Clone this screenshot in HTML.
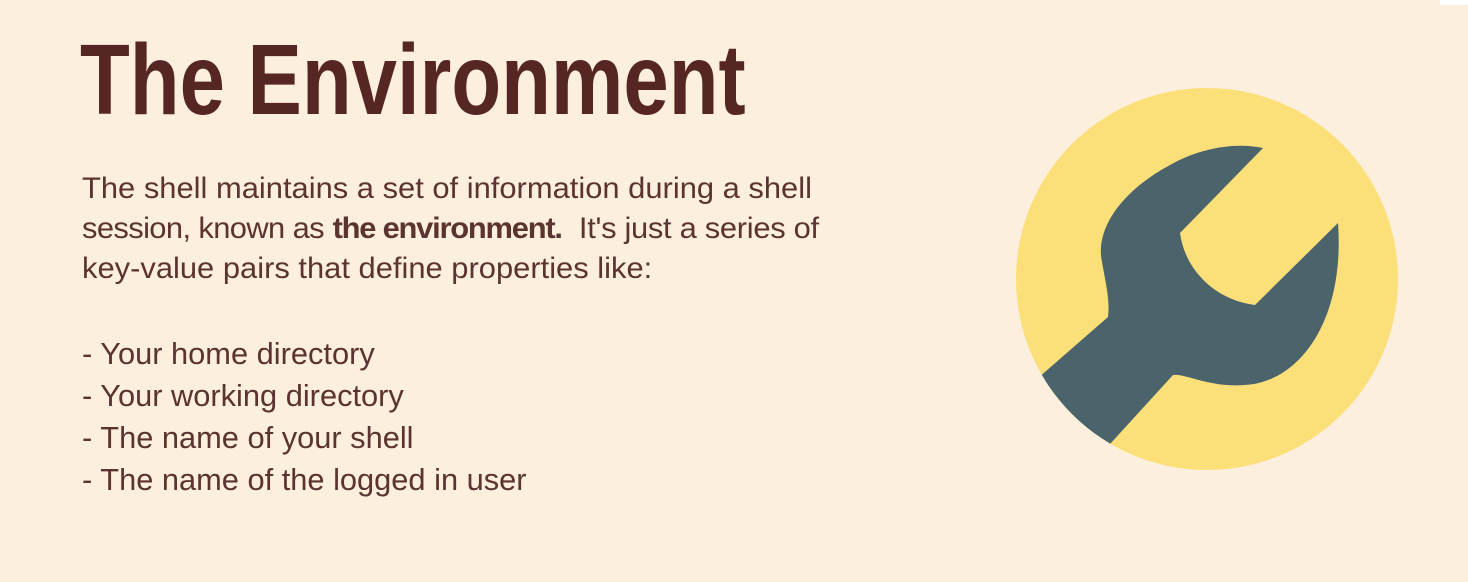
<!DOCTYPE html>
<html><head><meta charset="utf-8"><style>
html,body{margin:0;padding:0}
body{width:1468px;height:582px;background:#fdefdd;position:relative;overflow:hidden;font-family:"Liberation Sans",sans-serif}
.t{position:absolute;left:80px;top:20px;font-size:100px;font-weight:bold;color:#562624;transform:scaleX(0.815);transform-origin:left top;white-space:nowrap;line-height:120px}
.p{position:absolute;left:82px;white-space:nowrap;color:#5b3330;font-size:30px;line-height:40px;transform:scaleX(1.03);transform-origin:left top}
.p b{letter-spacing:-1.2px}
.l{position:absolute;left:82px;white-space:nowrap;color:#5b3330;font-size:30.8px;line-height:42px}
</style></head><body>
<div style="position:absolute;right:0;top:0;width:28px;height:5px;background:#fff"></div>
<div class="t">The Environment</div>
<div class="p" style="top:169px">The shell maintains a set of information during a shell<br><span style="letter-spacing:-0.6px">session, known as</span> <b>the environment.</b>&nbsp; <span style="letter-spacing:-0.3px">It's just a series of</span><br>key-value pairs that define properties like:</div>
<div class="l" style="top:333px">- Your home directory<br>- Your working directory<br>- The name of your shell<br>- The name of the logged in user</div>
<svg style="position:absolute;left:0;top:0" width="1468" height="582">
<defs><clipPath id="c"><circle cx="1207" cy="279" r="191"/></clipPath></defs>
<circle cx="1207" cy="279" r="191" fill="#fbe07a"/>
<path clip-path="url(#c)" fill="#4b636b" d="M1263,148 C1235,142 1200,148 1170,165 C1120,192 1095,230 1102,262 C1106,285 1110,300 1108,317 L1030,385 L1100,455 L1173,375 C1185,373 1210,388 1245,385 C1300,382 1345,320 1338,223 L1255,305 C1215,300 1185,270 1180,233 Z"/>
</svg>
</body></html>
